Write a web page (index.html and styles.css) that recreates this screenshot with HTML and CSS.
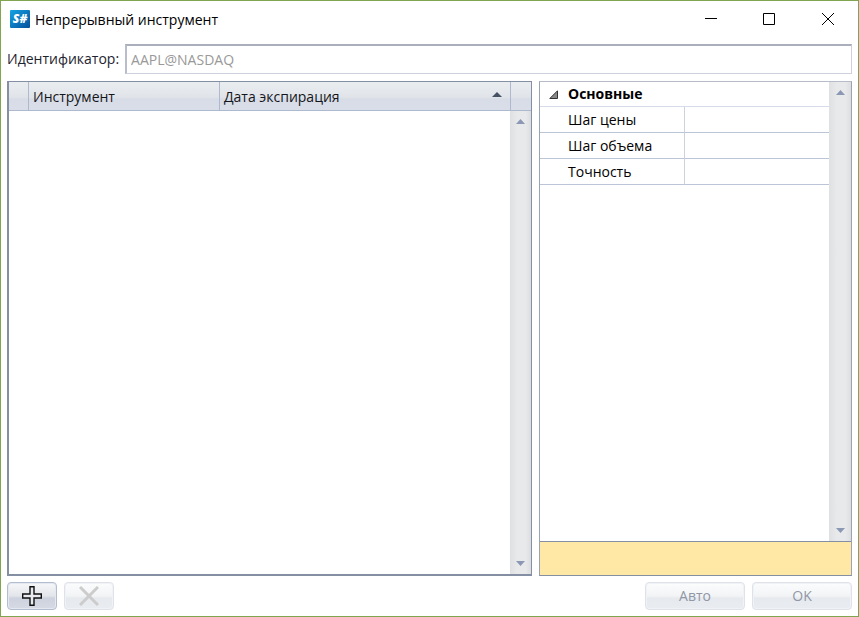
FILE: index.html
```
<!DOCTYPE html>
<html lang="ru">
<head>
<meta charset="utf-8">
<title>Непрерывный инструмент</title>
<link rel="stylesheet" href="styles.css">
</head>
<body>
<header class="titlebar">
  <svg class="logo" viewBox="0 0 20 18" aria-hidden="true">
    <defs>
      <linearGradient id="logo-fill" x1="0" y1="0" x2="1" y2="1">
        <stop offset="0" stop-color="#14a4e4"/>
        <stop offset="1" stop-color="#064f9c"/>
      </linearGradient>
    </defs>
    <rect width="20" height="18" rx="1" fill="url(#logo-fill)"/>
    <text class="logo-text" x="10" y="13" text-anchor="middle">S#</text>
  </svg>
  <h1 class="title">Непрерывный инструмент</h1>
  <button class="window-button" type="button" aria-label="Свернуть">
    <svg viewBox="0 0 12 12"><path d="M0 5.5H12"/></svg>
  </button>
  <button class="window-button" type="button" aria-label="Развернуть">
    <svg viewBox="0 0 12 12"><path d="M.5.5H11.5V11.5H.5Z"/></svg>
  </button>
  <button class="window-button" type="button" aria-label="Закрыть">
    <svg viewBox="0 0 12 12"><path d="M0 0L12 12M12 0L0 12"/></svg>
  </button>
</header>

<div class="identifier">
  <label for="identifier">Идентификатор:</label>
  <input id="identifier" type="text" value="AAPL@NASDAQ" disabled>
</div>

<main class="panels">
  <section class="instruments">
    <table class="instruments-table">
      <thead>
        <tr>
          <th class="col-marker"></th>
          <th class="col-name">Инструмент</th>
          <th><span class="sortable">Дата экспирация
            <svg class="sort-arrow" viewBox="0 0 10 5"><path d="M5 0L10 5H0Z"/></svg></span></th>
          <th class="col-scroll"></th>
        </tr>
      </thead>
    </table>
    <div class="scrollbar">
      <svg viewBox="0 0 9 5"><path d="M4.5 0L9 5H0Z"/></svg>
      <svg viewBox="0 0 9 5"><path d="M0 0H9L4.5 5Z"/></svg>
    </div>
  </section>

  <section class="properties">
    <div class="properties-body">
      <div class="properties-list">
        <h2 class="category">
          <svg viewBox="0 0 9 9"><path d="M8.500 .8V8.500H.8Z"/></svg>
          Основные
        </h2>
        <table class="properties-table">
          <tr><th scope="row">Шаг цены</th><td></td></tr>
          <tr><th scope="row">Шаг объема</th><td></td></tr>
          <tr><th scope="row">Точность</th><td></td></tr>
        </table>
      </div>
      <div class="scrollbar">
        <svg viewBox="0 0 9 5"><path d="M4.5 0L9 5H0Z"/></svg>
        <svg viewBox="0 0 9 5"><path d="M0 0H9L4.5 5Z"/></svg>
      </div>
    </div>
    <div class="description"></div>
  </section>
</main>

<footer class="actions">
  <button class="button button-icon" type="button" aria-label="Добавить">
    <svg viewBox="0 0 20 20"><path class="plus" d="M8 .7H12V8H19.300V12H12V19.300H8V12H.7V8H8Z"/></svg>
  </button>
  <button class="button button-icon" type="button" aria-label="Удалить" disabled>
    <svg viewBox="0 0 20 20"><path class="cross" d="M1 1L19 19M19 1L1 19"/></svg>
  </button>
  <span class="spacer"></span>
  <button class="button button-text" type="button" disabled>Авто</button>
  <button class="button button-text" type="button" disabled>OK</button>
</footer>
</body>
</html>
```
FILE: styles.css
```
* {
  box-sizing: border-box;
}

body {
  display: flex;
  flex-direction: column;
  min-height: 100vh;
  margin: 0;
  padding: 0 6px 6px;
  border: 1px solid #80a450;
  background: #fff;
  color: #000;
  font: 14px/20px "Open Sans", "Noto Sans", sans-serif;
}

svg {
  display: block;
}

button,
input {
  font: inherit;
}

.titlebar {
  display: flex;
  align-items: center;
  height: 36px;
  padding-left: 3px;
}

.logo {
  width: 20px;
  height: 18px;
}

.logo-text {
  fill: #fff;
  font: italic 800 12px "Open Sans", sans-serif;
}

.title {
  flex: 1;
  margin: 0 0 0 5px;
  padding-top: 2px;
  font-size: 14px;
  font-weight: 400;
}

.window-button {
  display: grid;
  place-items: center;
  width: 58px;
  height: 36px;
  margin: 0;
  padding: 0;
  border: 0;
  background: none;
}

.window-button:last-child {
  width: 48px;
  margin-left: 6px;
}

.window-button svg {
  width: 12px;
  height: 12px;
  fill: none;
  stroke: #000;
}

.identifier {
  display: flex;
  align-items: center;
  gap: 6px;
  margin-top: 7px;
}

.identifier label {
  color: #1e2330;
}

.identifier input {
  flex: 1;
  min-width: 0;
  height: 30px;
  padding: 0 4px;
  border: 1px solid #cdd0dd;
  border-top: 2px solid #a9b0bb;
  border-left: 2px solid #b9bdca;
  background: #fff;
  color: #999;
}

.panels {
  display: grid;
  grid-template-columns: 525fr 313fr;
  flex: 1;
  gap: 7px;
  margin-top: 7px;
}

.instruments,
.properties {
  display: flex;
  flex-direction: column;
}

.instruments {
  border: 1px solid #848fa3;
  border-width: 1px 1px 2px 2px;
}

.instruments-table,
.properties-table {
  width: 100%;
  border-collapse: separate;
  border-spacing: 0;
  table-layout: fixed;
}

.instruments-table th {
  height: 29px;
  padding: 2px 4px 0;
  border-right: 1px solid #aeb8cf;
  border-bottom: 1px solid #aeb8cf;
  background: linear-gradient(#eaedf0, #e0e4e9 55%, #d8dce6 60%, #dadee8);
  color: #14161c;
  font-weight: 400;
  text-align: left;
}

.instruments-table .col-marker {
  width: 20px;
  padding: 0;
}

.instruments-table .col-name {
  width: 191px;
}

.instruments-table .col-scroll {
  width: 20px;
  padding: 0;
  border-right: 0;
}

.sortable {
  display: flex;
  justify-content: space-between;
  padding-right: 4px;
}

.sort-arrow {
  width: 10px;
  height: 5px;
  margin-top: 5px;
  fill: #465065;
}

.scrollbar {
  display: flex;
  flex: 1;
  flex-direction: column;
  align-items: center;
  align-self: flex-end;
  justify-content: space-between;
  width: 21px;
  padding: 8px 0;
  background: linear-gradient(90deg, #dfe0e2, #e8e9eb 35%, #e8e9eb 75%, #dcdde0);
}

.scrollbar svg {
  width: 9px;
  height: 5px;
  fill: #8b98b4;
}

.properties {
  border: 1px solid #848fa3;
  border-top-color: #b6bdc9;
  border-left-color: #9aa3b4;
  border-right-color: #9aa3b4;
}

.properties-body {
  display: flex;
  flex: 1;
  border-bottom: 1px solid #848fa3;
}

.properties-list {
  flex: 1;
}

.properties .scrollbar {
  flex: none;
  align-self: stretch;
  width: 22px;
}

.category {
  display: flex;
  align-items: center;
  gap: 10px;
  height: 25px;
  margin: 0;
  padding-left: 9px;
  border-bottom: 1px solid #d8dcea;
  font-size: 14px;
  font-weight: 700;
}

.category svg {
  width: 9px;
  height: 9px;
  fill: #888;
  stroke: #333;
}

.properties-table th,
.properties-table td {
  height: 26px;
  padding: 0;
  border-bottom: 1px solid #bcc4d8;
}

.properties-table th {
  padding: 1px 0 0 28px;
  border-right: 1px solid #ccd2e2;
  font-weight: 400;
  text-align: left;
}

.description {
  height: 33px;
  background: #ffe8a6;
}

.actions {
  display: flex;
  gap: 7px;
  margin-top: 6px;
}

.spacer {
  flex: 1;
}

.button {
  display: grid;
  place-items: center;
  height: 28px;
  margin: 0;
  padding: 0;
  border: 1px solid #b4bcd0;
  border-radius: 4px;
  background: linear-gradient(#f6f7f9, #e2e5ea 50%, #cdd2de 58%, #d5dae4);
  box-shadow: inset 0 0 0 1px #e4e8f0;
  color: #000;
}

.button:disabled {
  border-color: #dfe2ea;
  background: linear-gradient(#fbfcfc, #f3f4f6 50%, #e6e9ee 58%, #e9ecf1);
  box-shadow: inset 0 0 0 1px #f0f2f6;
  color: #9097a6;
}

.button-icon {
  width: 50px;
}

.button-text {
  width: 100px;
}

.button-icon svg {
  width: 20px;
  height: 20px;
}

.plus {
  fill: #e8eaf0;
  stroke: #111;
  stroke-width: 1.4;
}

.cross {
  fill: none;
  stroke: #ccc;
  stroke-width: 3;
}
```
